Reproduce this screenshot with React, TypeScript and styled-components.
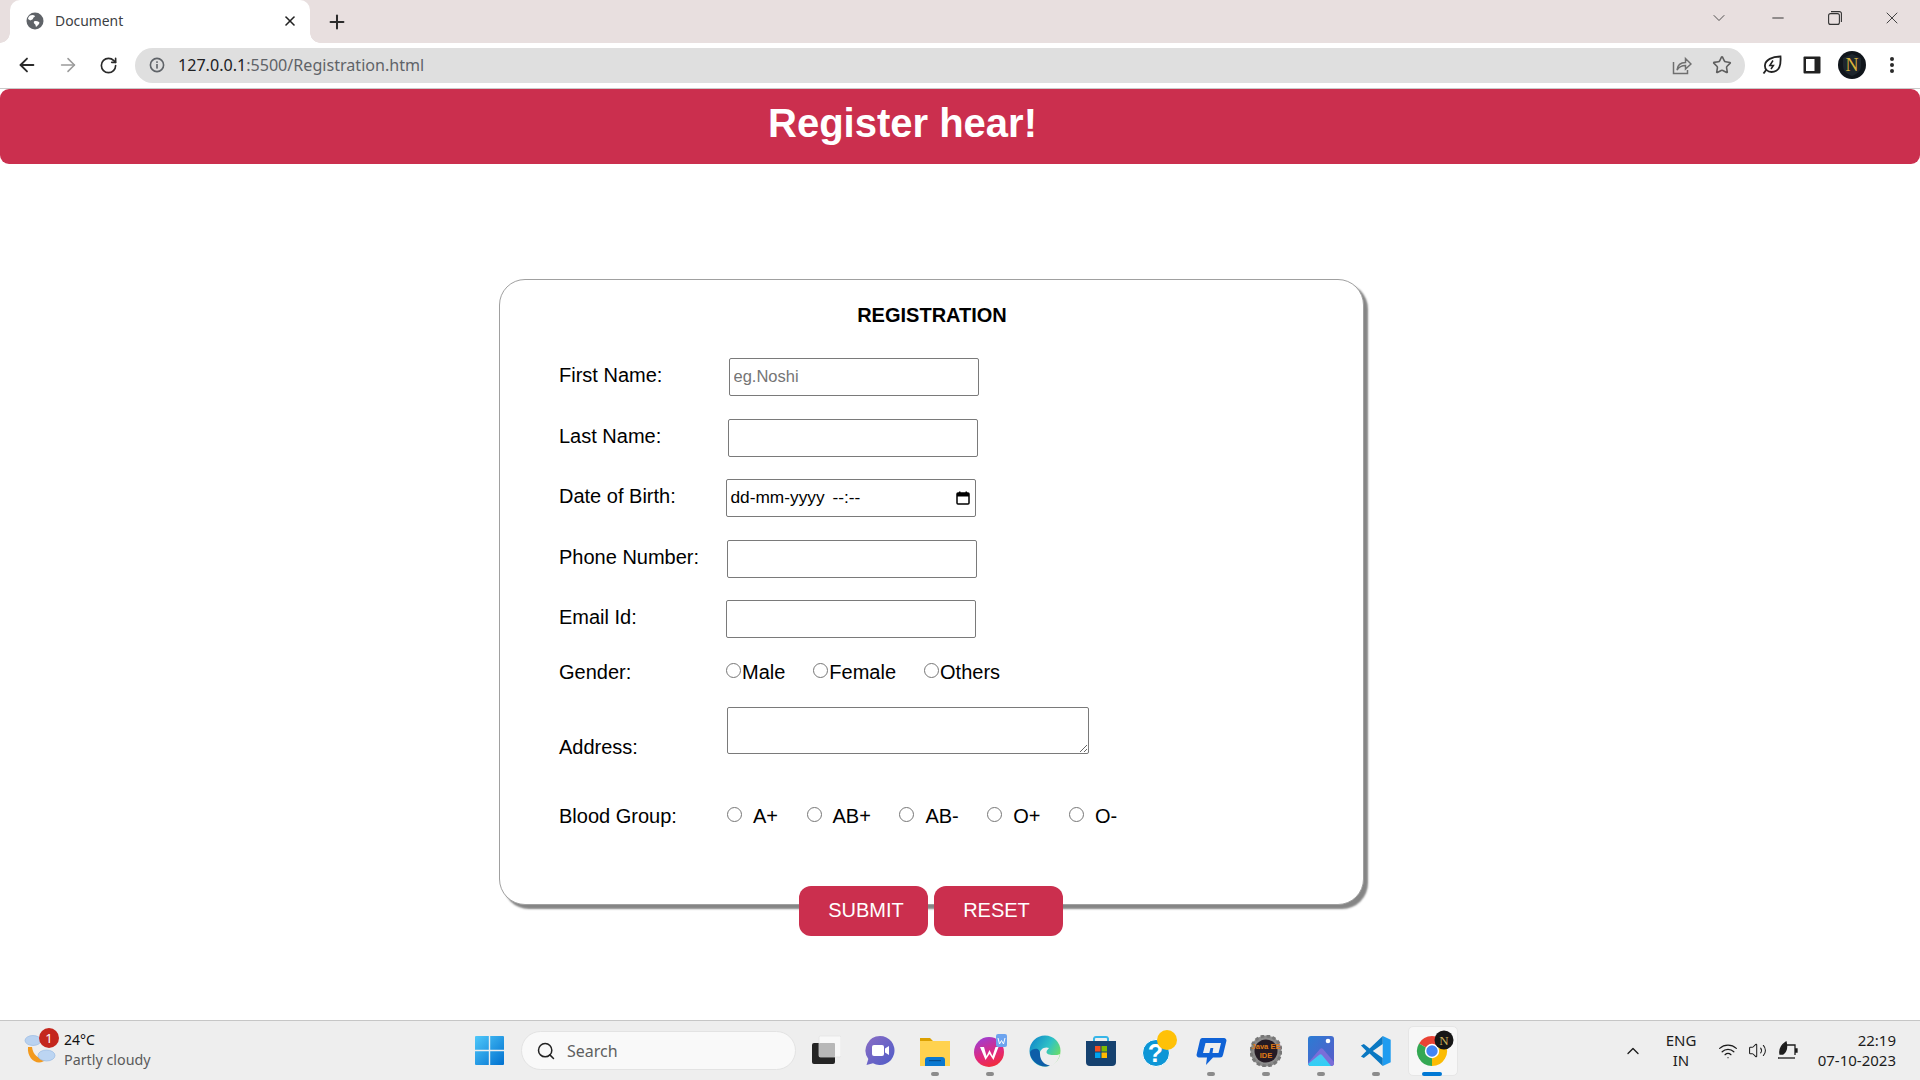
import * as React from 'react';
import styled, { createGlobalStyle } from 'styled-components';
import {
  ArrowLeft,
  ArrowRight,
  ChevronDown,
  ChevronUp,
  Minus,
  Plus,
  RotateCw,
  Search,
  Star,
  Volume2,
  Wifi,
  X,
} from 'lucide-react';

const RED = '#cb2f4e';
const UI_FONT = '"Noto Sans", "Open Sans", sans-serif';
const PAGE_FONT = '"Liberation Sans", Arial, sans-serif';

const GlobalStyle = createGlobalStyle`
  html, body {
    margin: 0;
    padding: 0;
    background: #fff;
  }
  * {
    box-sizing: border-box;
  }
`;

const Screen = styled.div`
  width: 1920px;
  height: 1080px;
  display: flex;
  flex-direction: column;
  overflow: hidden;
  background: #fff;
`;

/* ---------- browser chrome ---------- */

const TabStrip = styled.div`
  height: 43px;
  flex: none;
  display: flex;
  align-items: flex-end;
  background: #e8dfdf;
  padding-left: 10px;
`;

const Tab = styled.div`
  position: relative;
  width: 300px;
  height: 43px;
  display: flex;
  align-items: center;
  padding: 0 12px 2px 16px;
  background: #fff;
  border-radius: 10px 10px 0 0;
  font: 13.9px ${UI_FONT};
  color: #3c4043;

  &::before,
  &::after {
    content: '';
    position: absolute;
    bottom: 0;
    width: 10px;
    height: 10px;
    background: radial-gradient(circle at var(--cx) 0, #e8dfdf 9.5px, #fff 10px);
  }
  &::before {
    --cx: 0;
    left: -10px;
  }
  &::after {
    --cx: 100%;
    right: -10px;
  }
`;

const TabTitle = styled.span`
  margin-left: 11px;
  flex: 1;
`;

const NewTab = styled.div`
  margin-left: 16px;
  height: 43px;
  display: flex;
  align-items: center;
  color: #2b2b2b;
`;

const WindowControls = styled.div`
  margin-left: auto;
  height: 36px;
  align-self: flex-start;
  display: flex;
`;

const WindowButton = styled.div<{ $w?: number }>`
  width: ${(p) => p.$w ?? 57}px;
  height: 36px;
  display: flex;
  align-items: center;
  justify-content: center;
  color: #333;
`;

const Toolbar = styled.div`
  height: 46px;
  flex: none;
  display: flex;
  align-items: center;
  padding: 5px 8px 6px 7px;
  background: #fff;
  border-bottom: 1px solid #c9c9c9;
`;

const NavButton = styled.div<{ $w: number; $muted?: boolean }>`
  width: ${(p) => p.$w}px;
  display: flex;
  justify-content: center;
  color: ${(p) => (p.$muted ? '#9b9b9b' : '#2a2a2a')};
`;

const UrlPill = styled.div`
  flex: 1;
  height: 35px;
  margin: 0 7px 0 8px;
  display: flex;
  align-items: center;
  padding: 0 3px 0 14px;
  border-radius: 18px;
  background: #dfdfdf;
`;

const UrlText = styled.div`
  flex: 1;
  margin-left: 13px;
  font: 16.1px ${UI_FONT};
  color: #5f6368;

  b {
    font-weight: 400;
    color: #202124;
  }
`;

const ToolSlot = styled.div`
  width: 40px;
  display: flex;
  justify-content: center;
  align-items: center;
  color: #5f5f5f;
`;

/* ---------- page ---------- */

const Page = styled.main`
  flex: 1;
  min-height: 0;
  font-family: ${PAGE_FONT};
  color: #000;
`;

const Banner = styled.header`
  height: 75px;
  display: flex;
  align-items: center;
  justify-content: center;
  padding: 0 115px 6px 0;
  background: ${RED};
  border-radius: 9px;
  color: #fff;
  font-size: 40px;
  font-weight: 700;
`;

const Card = styled.form`
  width: 865px;
  height: 626px;
  margin: 115px 0 0 499px;
  padding: 24px 0 0 59px;
  border: 1.5px solid #a0a0a0;
  border-radius: 26px;
  box-shadow: 4px 4px 2px #858585;
  background: #fff;
`;

const CardTitle = styled.h1`
  margin: 0 0 31px -58px;
  font-size: 20px;
  line-height: 23px;
  font-weight: 700;
  text-align: center;
`;

const Row = styled.div<{ $h?: number; $gap?: number; $align?: string }>`
  display: flex;
  align-items: ${(p) => p.$align ?? 'center'};
  height: ${(p) => p.$h ?? 38}px;
  margin-bottom: ${(p) => p.$gap ?? 22.5}px;
`;

const FieldLabel = styled.label<{ $lift?: number }>`
  width: 167px;
  flex: none;
  margin-bottom: ${(p) => p.$lift ?? 4}px;
  font-size: 20px;
  line-height: 23px;
`;

const TextField = styled.input<{ $shift?: number }>`
  width: 250px;
  height: 38px;
  margin: 0 0 0 ${(p) => p.$shift ?? 0}px;
  padding: 0 3.5px 2px;
  border: 1.5px solid #7a7a7a;
  border-radius: 2px;
  background: #fff;
  font: 16.5px ${PAGE_FONT};
  outline: none;

  &::placeholder {
    color: #757575;
    opacity: 1;
  }
`;

const DateField = styled.div`
  width: 250px;
  height: 38px;
  display: flex;
  align-items: center;
  justify-content: space-between;
  padding: 0 5px 0 3.5px;
  border: 1.5px solid #7a7a7a;
  border-radius: 2px;
  font-size: 17.3px;
  color: #000;
`;

const DateText = styled.span`
  word-spacing: 3px;
  padding-bottom: 1px;
`;

const Options = styled.div<{ $gap: number }>`
  display: flex;
  align-items: center;
  gap: ${(p) => p.$gap}px;
`;

const Option = styled.label`
  display: flex;
  align-items: center;
  font-size: 20px;
  line-height: 23px;
`;

const Radio = styled.input.attrs({ type: 'radio' })<{ $space?: number; $left?: number }>`
  width: 15px;
  height: 15px;
  margin: -4px ${(p) => p.$space ?? 1}px 0 ${(p) => p.$left ?? 0}px;
  accent-color: #767676;
`;

const AddressBox = styled.textarea`
  width: 362px;
  height: 47px;
  margin: 0 0 0 1px;
  border: 1.5px solid #7a7a7a;
  border-radius: 2px;
  font: 18px ${PAGE_FONT};
  outline: none;
`;

const Actions = styled.div`
  display: flex;
  justify-content: center;
  gap: 6px;
  margin: 57px 0 0 -60px;
`;

const ActionButton = styled.button<{ $left?: number; $right?: number }>`
  width: 129px;
  height: 50px;
  padding: 0 ${(p) => p.$right ?? 0}px 0 ${(p) => p.$left ?? 0}px;
  border: 0;
  border-radius: 12px;
  background: ${RED};
  color: #fff;
  font: 20px ${PAGE_FONT};
`;

/* ---------- taskbar ---------- */

const Taskbar = styled.footer`
  height: 60px;
  flex: none;
  display: flex;
  align-items: center;
  background: #eee;
  border-top: 1px solid #c6c6c6;
  font-family: ${UI_FONT};
`;

const Weather = styled.div`
  width: 475px;
  flex: none;
  display: flex;
  align-items: center;
  padding: 0 0 2px 22px;
`;

const WeatherIcon = styled.div`
  position: relative;
  width: 36px;
  height: 36px;
  margin-right: 6px;
`;

const WeatherBadge = styled.span`
  position: absolute;
  top: -4px;
  left: 17px;
  width: 20px;
  height: 20px;
  border-radius: 50%;
  background: #c4261d;
  color: #fff;
  font-size: 13px;
  line-height: 20px;
  text-align: center;
`;

const WeatherText = styled.div`
  font-size: 14px;
  line-height: 20px;
  color: #111;

  small {
    display: block;
    font-size: 14.3px;
    color: #5b5b5b;
  }
`;

const StartSlot = styled.div`
  width: 46px;
  flex: none;
  display: flex;
`;

const SearchBox = styled.div`
  width: 275px;
  height: 39px;
  margin-right: 1px;
  flex: none;
  display: flex;
  align-items: center;
  gap: 11px;
  padding-left: 14px;
  border: 1px solid #e3e3e3;
  border-radius: 20px;
  background: #f9f9f9;
  color: #5f5f5f;
  font-size: 16px;
`;

const AppSlot = styled.div<{ $active?: boolean }>`
  position: relative;
  width: 55.2px;
  height: 59px;
  flex: none;
  display: flex;
  align-items: center;
  justify-content: center;

  ${(p) =>
    p.$active &&
    `
    &::before {
      content: '';
      position: absolute;
      top: 5px;
      left: 4px;
      width: 48px;
      height: 48px;
      border: 1px solid #e6e6e6;
      border-radius: 5px;
      background: #f7f7f7;
    }
  `}

  svg {
    position: relative;
  }
`;

const RunDot = styled.span<{ $active?: boolean }>`
  position: absolute;
  bottom: 4px;
  left: 50%;
  width: ${(p) => (p.$active ? 20 : 8)}px;
  height: 4px;
  margin-left: ${(p) => (p.$active ? -10 : -4)}px;
  border-radius: 2px;
  background: ${(p) => (p.$active ? '#0078d4' : '#8b8b8b')};
`;

const Tray = styled.div`
  margin-left: auto;
  display: flex;
  align-items: center;
  color: #1c1c1c;
`;

const TrayIcon = styled.div<{ $w: number }>`
  width: ${(p) => p.$w}px;
  display: flex;
  justify-content: center;
`;

const TrayText = styled.div<{ $w: number; $right?: boolean }>`
  width: ${(p) => p.$w}px;
  font-size: 15px;
  line-height: 20px;
  padding-bottom: 1px;
  text-align: ${(p) => (p.$right ? 'right' : 'center')};
`;

/* ---------- drawn icons ---------- */

const GlobeIcon = () => (
  <svg width="18" height="18" viewBox="0 0 18 18">
    <circle cx="9" cy="9" r="8.5" fill="#5f6368" />
    <path d="M4 3.5c2-1 4-.6 5 .5 0 1.500-2 1.200-2 2.700 0 1-2 .8-2.600 1.800L2 7c.2-1.300 1-2.600 2-3.500z" fill="#fff" />
    <path d="M8 9.500c1.500-.8 3.500-.4 5 .4.800.5.300 1.600-.3 2.400-.7 1-1.400 1.700-2.700 2.700-.4-1-.2-2-1-2.700-.8-.6-1.600-1.600-1-2.800z" fill="#fff" />
  </svg>
);

const InfoIcon = () => (
  <svg width="16" height="16" viewBox="0 0 16 16">
    <circle cx="8" cy="8" r="6.6" fill="none" stroke="#5f6368" strokeWidth="1.6" />
    <rect x="7.2" y="7" width="1.6" height="4.6" fill="#5f6368" />
    <rect x="7.2" y="4.300" width="1.6" height="1.6" fill="#5f6368" />
  </svg>
);

const ShareIcon = () => (
  <svg width="20" height="20" viewBox="0 0 20 20" fill="none" stroke="#6f6f6f" strokeWidth="1.5">
    <path d="M1.500 7v11.500h14V15" />
    <path d="M5 15c.500-4.500 3.500-7.500 8.500-7.500V3.500L19 9l-5.500 5v-3.500C10 10.500 7 12 5 15z" />
  </svg>
);

const LeafIcon = () => (
  <svg width="20" height="20" viewBox="0 0 20 20" fill="none" stroke="#222" strokeWidth="1.800">
    <path d="M18.500 1.500C19 9 18 17 9.500 17 5.500 17 2.500 14 3 10c.500-5 7-8.500 15.500-8.500z" />
    <path d="M11 5.500 7.800 10.500h3.600L9 14" strokeWidth="1.500" />
    <path d="M4.500 14.500 1.500 18.500" />
  </svg>
);

const PanelIcon = () => (
  <svg width="18" height="18" viewBox="0 0 18 18">
    <rect x="0.500" y="0.500" width="17" height="17" rx="1" fill="#222" />
    <rect x="3" y="3" width="8.500" height="12" fill="#fff" />
  </svg>
);

const AvatarIcon = ({ size = 28 }: { size?: number }) => (
  <svg width={size} height={size} viewBox="0 0 28 28">
    <circle cx="14" cy="14" r="14" fill="#10151b" />
    <path d="M14 3 23 7v8c0 5-4 8-9 10-5-2-9-5-9-10V7z" fill="#1e262d" />
    <text x="14" y="20" textAnchor="middle" fontFamily="Liberation Serif, serif" fontSize="18" fill="#d9b23a">
      N
    </text>
  </svg>
);

const DotsIcon = () => (
  <svg width="6" height="18" viewBox="0 0 6 18" fill="#2a2a2a">
    <circle cx="3" cy="3" r="2" />
    <circle cx="3" cy="9" r="2" />
    <circle cx="3" cy="15" r="2" />
  </svg>
);

const RestoreIcon = () => (
  <svg width="14" height="14" viewBox="0 0 14 14" fill="none" stroke="#333" strokeWidth="1.100">
    <rect x="0.600" y="2.600" width="10.800" height="10.800" rx="2" />
    <path d="M3 .6h8.400a2 2 0 0 1 2 2V11" />
  </svg>
);

const CalendarIcon = () => (
  <svg width="14" height="14" viewBox="0 0 14 14">
    <rect x="1" y="2" width="12" height="11" rx="1" fill="none" stroke="#000" strokeWidth="1.500" />
    <rect x="1" y="2" width="12" height="3.500" fill="#000" />
    <rect x="3" y="0.500" width="1.500" height="2" fill="#000" />
    <rect x="9.500" y="0.500" width="1.500" height="2" fill="#000" />
  </svg>
);

const WeatherArt = () => (
  <svg width="36" height="36" viewBox="0 0 36 36">
    <path d="M6 15c-1 9 5 15.500 11 15.500 3 0 5.500-1.200 7-3.500-8 0-13-4-14-12z" fill="#f39a1e" />
    <ellipse cx="11" cy="8.500" rx="8" ry="5" fill="#b9d2f0" stroke="#8fb3e0" strokeWidth=".6" />
    <ellipse cx="24.500" cy="23.500" rx="8.500" ry="5.500" fill="#bcd5f2" stroke="#8fb3e0" strokeWidth=".6" />
  </svg>
);

const WindowsLogo = () => (
  <svg width="29" height="29" viewBox="0 0 29 29">
    <defs>
      <linearGradient id="winLogo" x1="0" y1="0" x2="1" y2="1">
        <stop offset="0" stopColor="#4fc8fa" />
        <stop offset="1" stopColor="#0070cf" />
      </linearGradient>
    </defs>
    <path d="M0 1a1 1 0 0 1 1-1h12.800v13.800H0zM15.200 0H28a1 1 0 0 1 1 1v12.800H15.200zM0 15.200h13.800V29H1a1 1 0 0 1-1-1zM15.200 15.200H29V28a1 1 0 0 1-1 1H15.200z" fill="url(#winLogo)" />
  </svg>
);

const TaskViewIcon = () => (
  <svg width="32" height="32" viewBox="0 0 32 32">
    <rect x="3" y="8" width="23" height="21" rx="2" fill="#242424" />
    <rect x="10" y="1" width="22" height="21" rx="1.500" fill="#f8f8f8" stroke="#e2e2e2" strokeWidth=".7" />
    <rect x="10" y="8" width="16" height="14" rx="1" fill="#b8b8b8" />
  </svg>
);

const ChatIcon = () => (
  <svg width="32" height="32" viewBox="0 0 32 32">
    <defs>
      <linearGradient id="chatBg" x1="0" y1="0" x2="1" y2="1">
        <stop offset="0" stopColor="#8a6dc4" />
        <stop offset="1" stopColor="#4f5cc8" />
      </linearGradient>
    </defs>
    <path d="M16 1a14.500 14.500 0 1 1-7 27.200L2.500 30l1.800-6A14.500 14.500 0 0 1 16 1z" fill="url(#chatBg)" />
    <rect x="8" y="10" width="12" height="11" rx="2" fill="#fff" />
    <path d="M21 13.500 25 11v9l-4-2.500z" fill="#fff" />
  </svg>
);

const FolderIcon = () => (
  <svg width="32" height="32" viewBox="0 0 32 32">
    <path d="M1 3h10l3 3h17v8H1z" fill="#dca000" />
    <rect x="1" y="6" width="30" height="25" fill="#ffd24f" />
    <path d="M6 31v-6a3 3 0 0 1 3-3h14a3 3 0 0 1 3 3v6z" fill="#0a78d0" />
    <rect x="10" y="25" width="12" height="1.200" fill="#054e8f" />
  </svg>
);

const WpsIcon = () => (
  <svg width="34" height="34" viewBox="0 0 34 34">
    <defs>
      <linearGradient id="wpsBg" x1="0.200" y1="0" x2="0.600" y2="1">
        <stop offset="0" stopColor="#9a3fd6" />
        <stop offset="0.600" stopColor="#e0287e" />
        <stop offset="1" stopColor="#f22c3a" />
      </linearGradient>
    </defs>
    <circle cx="16" cy="18" r="15" fill="url(#wpsBg)" />
    <path d="M7 13h4l2.500 9 3-6 3 6 3-9h3l-5 13-4-6-4 6z" fill="#fff" />
    <rect x="23" y="0" width="11" height="13" rx="2" fill="#6da4ef" />
    <path d="M25 4l1.500 6 2-3.500 2 3.500L32 4" fill="none" stroke="#fff" strokeWidth="1" />
  </svg>
);

const EdgeIcon = () => (
  <svg width="32" height="32" viewBox="0 0 32 32">
    <defs>
      <linearGradient id="edgeBg" x1="0" y1="0" x2="1" y2="0.600">
        <stop offset="0" stopColor="#0c7fca" />
        <stop offset="0.600" stopColor="#2fc2c6" />
        <stop offset="1" stopColor="#6ede62" />
      </linearGradient>
    </defs>
    <circle cx="16" cy="16" r="15.500" fill="url(#edgeBg)" />
    <path d="M31 19c-1.500 1-3.500 1-7 1-4 0-6.500-1-6.500-3s2-3 2.500-4c-4-2-9.500 1-9.500 6.500 0 5.500 4.500 11.500 10 12 5-1 9-6 10.500-12.500z" fill="#eee" />
    <path d="M11 19c0 6 4 11 10 11.500-2 .6-3.500 1-5 1C9 31.500 1 25 1 17c3-4 10-5 10 2z" fill="#0d5ea8" />
  </svg>
);

const StoreIcon = () => (
  <svg width="32" height="32" viewBox="0 0 32 32">
    <path d="M9 7V3.500A2 2 0 0 1 11 2h10a2 2 0 0 1 2 1.500V7" fill="none" stroke="#37b6e8" strokeWidth="2" />
    <path d="M1 6h30v21a4 4 0 0 1-4 4H5a4 4 0 0 1-4-4z" fill="#15416f" />
    <rect x="10" y="11" width="5.500" height="5.500" fill="#f25022" />
    <rect x="16.500" y="11" width="5.500" height="5.500" fill="#7fba00" />
    <rect x="10" y="17.500" width="5.500" height="5.500" fill="#00a4ef" />
    <rect x="16.500" y="17.500" width="5.500" height="5.500" fill="#ffb900" />
  </svg>
);

const HelpIcon = () => (
  <svg width="44" height="44" viewBox="0 0 44 44">
    <circle cx="22" cy="24" r="13.500" fill="#0d96d6" stroke="#fff" strokeWidth="1" />
    <text x="21.500" y="33" textAnchor="middle" fontFamily="Liberation Sans, sans-serif" fontWeight="700" fontSize="25" fill="#fff">
      ?
    </text>
    <circle cx="33" cy="11" r="10" fill="#ffc107" />
  </svg>
);

const AssistIcon = () => (
  <svg width="32" height="32" viewBox="0 0 32 32">
    <path d="M7 3h22a2.500 2.500 0 0 1 2.400 3L28 20a3 3 0 0 1-3 2.500H18L11 30l1-7.500H4a2.500 2.500 0 0 1-2.400-3L5 5a2.500 2.500 0 0 1 2-2z" fill="#0f62d6" />
    <path d="M10.500 8h15.500l-2.500 10h-6l.8-5h-2.800l-1.200 5H8z" fill="#eee" />
  </svg>
);

const GearIcon = () => (
  <svg width="32" height="32" viewBox="0 0 32 32">
    <circle cx="16" cy="16" r="13" fill="none" stroke="#8b8b8b" strokeWidth="5" />
    <circle cx="16" cy="16" r="15" fill="none" stroke="#777" strokeWidth="3" strokeDasharray="3.500 2.400" />
    <circle cx="16" cy="16" r="11.500" fill="#241a24" />
    <text x="16" y="14" textAnchor="middle" fontFamily="Liberation Sans, sans-serif" fontWeight="700" fontSize="7.500" fill="#e07b16">
      Java EE
    </text>
    <text x="16" y="23" textAnchor="middle" fontFamily="Liberation Sans, sans-serif" fontWeight="700" fontSize="7.500" fill="#e07b16">
      IDE
    </text>
  </svg>
);

const PhotosIcon = () => (
  <svg width="32" height="32" viewBox="0 0 32 32">
    <defs>
      <linearGradient id="photoBg" x1="0" y1="0" x2="1" y2="1">
        <stop offset="0" stopColor="#2b7cd3" />
        <stop offset="1" stopColor="#5a5bc9" />
      </linearGradient>
      <linearGradient id="photoHill" x1="0" y1="0" x2="0" y2="1">
        <stop offset="0" stopColor="#4cc2f1" />
        <stop offset="1" stopColor="#2fd0f5" />
      </linearGradient>
    </defs>
    <rect x="3" y="1" width="26" height="30" rx="3" fill="url(#photoBg)" />
    <circle cx="23" cy="6" r="2.300" fill="#fff" />
    <path d="M3 28 15 14c1-1 2-1 3 0l11 13v1a3 3 0 0 1-3 3H6a3 3 0 0 1-3-3z" fill="#7a6dd8" />
    <path d="M3 29 14 20c1-1 2-1 3 0l9 11H6a3 3 0 0 1-3-2z" fill="url(#photoHill)" />
  </svg>
);

const VsCodeIcon = () => (
  <svg width="32" height="32" viewBox="0 0 100 100">
    <path d="M71 3 96 15V85L71 97z" fill="#1f9cf0" />
    <path d="M71 3 30 42 12 28 3 33 20 50 3 67l9 5 18-14 41 39V72L40 50 71 28z" fill="#0a78c2" />
  </svg>
);

const ChromeIcon = () => (
  <svg width="44" height="44" viewBox="0 0 44 44">
    <g transform="translate(7 2)">
      <path d="M15 20 2 12.500A15 15 0 0 1 28 12.500z" fill="#ea4335" />
      <path d="M15 20 28 12.500A15 15 0 0 1 15 35z" fill="#fbbc04" />
      <path d="M15 20V35A15 15 0 0 1 2 12.500z" fill="#34a853" />
      <circle cx="15" cy="20" r="7.200" fill="#fff" />
      <circle cx="15" cy="20" r="5.700" fill="#4285f4" />
    </g>
    <circle cx="34" cy="11" r="9.500" fill="#161616" />
    <text x="34" y="16" textAnchor="middle" fontFamily="Liberation Serif, serif" fontSize="13" fill="#cdb35a">
      N
    </text>
  </svg>
);

const BatteryLeafIcon = () => (
  <svg width="22" height="20" viewBox="0 0 22 20" fill="none" stroke="#1c1c1c" strokeWidth="1.300">
    <path d="M8 4h10v10" />
    <path d="M18 8h2v3h-2" fill="#1c1c1c" />
    <path d="M1 17h17" />
    <path d="M3 13C2 7 6 3 9 1c1 4 1 9-3 12z" fill="#1c1c1c" />
  </svg>
);

const apps: { icon: React.ReactNode; running?: boolean; active?: boolean }[] = [
  { icon: <TaskViewIcon /> },
  { icon: <ChatIcon /> },
  { icon: <FolderIcon />, running: true },
  { icon: <WpsIcon />, running: true },
  { icon: <EdgeIcon /> },
  { icon: <StoreIcon /> },
  { icon: <HelpIcon /> },
  { icon: <AssistIcon />, running: true },
  { icon: <GearIcon />, running: true },
  { icon: <PhotosIcon />, running: true },
  { icon: <VsCodeIcon />, running: true },
  { icon: <ChromeIcon />, running: true, active: true },
];

export default function App() {
  return (
    <Screen>
      <GlobalStyle />
      <TabStrip>
        <Tab>
          <GlobeIcon />
          <TabTitle>Document</TabTitle>
          <X size={16} strokeWidth={2.4} color="#222" />
        </Tab>
        <NewTab>
          <Plus size={22} strokeWidth={2.2} />
        </NewTab>
        <WindowControls>
          <WindowButton $w={60}>
            <ChevronDown size={20} strokeWidth={1} />
          </WindowButton>
          <WindowButton>
            <Minus size={18} strokeWidth={1.3} />
          </WindowButton>
          <WindowButton>
            <RestoreIcon />
          </WindowButton>
          <WindowButton>
            <X size={20} strokeWidth={1.1} />
          </WindowButton>
        </WindowControls>
      </TabStrip>

      <Toolbar>
        <NavButton $w={40}>
          <ArrowLeft size={22} strokeWidth={2} />
        </NavButton>
        <NavButton $w={42} $muted>
          <ArrowRight size={22} strokeWidth={1.7} />
        </NavButton>
        <NavButton $w={38}>
          <RotateCw size={19} strokeWidth={2.1} />
        </NavButton>
        <UrlPill>
          <InfoIcon />
          <UrlText>
            <b>127.0.0.1</b>:5500/Registration.html
          </UrlText>
          <ToolSlot>
            <ShareIcon />
          </ToolSlot>
          <ToolSlot>
            <Star size={20} strokeWidth={1.9} />
          </ToolSlot>
        </UrlPill>
        <ToolSlot>
          <LeafIcon />
        </ToolSlot>
        <ToolSlot>
          <PanelIcon />
        </ToolSlot>
        <ToolSlot>
          <AvatarIcon />
        </ToolSlot>
        <ToolSlot>
          <DotsIcon />
        </ToolSlot>
      </Toolbar>

      <Page>
        <Banner>Register hear!</Banner>
        <Card onSubmit={(e) => e.preventDefault()}>
          <CardTitle>REGISTRATION</CardTitle>
          <Row>
            <FieldLabel>First Name:</FieldLabel>
            <TextField $shift={3} placeholder="eg.Noshi" />
          </Row>
          <Row>
            <FieldLabel $lift={3}>Last Name:</FieldLabel>
            <TextField $shift={2} />
          </Row>
          <Row>
            <FieldLabel>Date of Birth:</FieldLabel>
            <DateField>
              <DateText>dd-mm-yyyy --:--</DateText>
              <CalendarIcon />
            </DateField>
          </Row>
          <Row>
            <FieldLabel $lift={3}>Phone Number:</FieldLabel>
            <TextField $shift={1} />
          </Row>
          <Row>
            <FieldLabel>Email Id:</FieldLabel>
            <TextField />
          </Row>
          <Row $h={24} $gap={22}>
            <FieldLabel $lift={0}>Gender:</FieldLabel>
            <Options $gap={28}>
              <Option>
                <Radio name="gender" />
                Male
              </Option>
              <Option>
                <Radio name="gender" />
                Female
              </Option>
              <Option>
                <Radio name="gender" />
                Others
              </Option>
            </Options>
          </Row>
          <Row $h={47} $gap={51} $align="flex-end">
            <FieldLabel $lift={-5}>Address:</FieldLabel>
            <AddressBox />
          </Row>
          <Row $h={24}>
            <FieldLabel $lift={1}>Blood Group:</FieldLabel>
            <Options $gap={28.5}>
              {['A+', 'AB+', 'AB-', 'O+', 'O-'].map((group, i) => (
                <Option key={group}>
                  <Radio name="blood" $space={11} $left={i === 0 ? 1 : 0} />
                  {group}
                </Option>
              ))}
            </Options>
          </Row>
          <Actions>
            <ActionButton $left={5}>SUBMIT</ActionButton>
            <ActionButton $right={4}>RESET</ActionButton>
          </Actions>
        </Card>
      </Page>

      <Taskbar>
        <Weather>
          <WeatherIcon>
            <WeatherArt />
            <WeatherBadge>1</WeatherBadge>
          </WeatherIcon>
          <WeatherText>
            24°C
            <small>Partly cloudy</small>
          </WeatherText>
        </Weather>
        <StartSlot>
          <WindowsLogo />
        </StartSlot>
        <SearchBox>
          <Search size={20} strokeWidth={1.8} color="#222" />
          Search
        </SearchBox>
        {apps.map((app, i) => (
          <AppSlot key={i} $active={app.active}>
            {app.icon}
            {app.running && <RunDot $active={app.active} />}
          </AppSlot>
        ))}
        <Tray>
          <TrayIcon $w={34}>
            <ChevronUp size={20} strokeWidth={1.6} />
          </TrayIcon>
          <TrayText $w={62}>
            ENG
            <br />
            IN
          </TrayText>
          <TrayIcon $w={32}>
            <Wifi size={20} strokeWidth={1.5} />
          </TrayIcon>
          <TrayIcon $w={26}>
            <Volume2 size={19} strokeWidth={1.3} />
          </TrayIcon>
          <TrayIcon $w={36}>
            <BatteryLeafIcon />
          </TrayIcon>
          <TrayText $w={90} $right>
            22:19
            <br />
            07-10-2023
          </TrayText>
          <TrayIcon $w={24} />
        </Tray>
      </Taskbar>
    </Screen>
  );
}
